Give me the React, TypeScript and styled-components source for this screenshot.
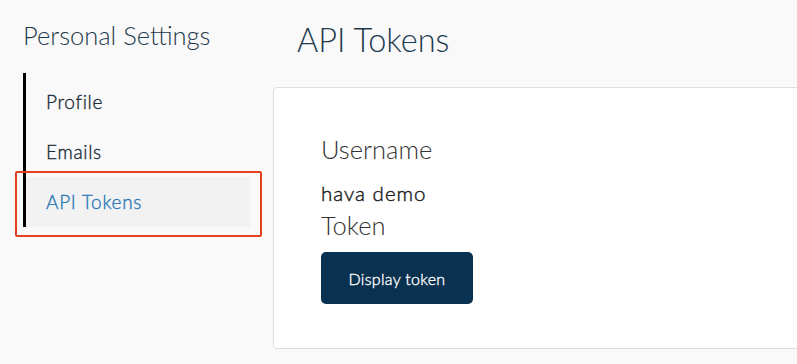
import React from 'react';
import styled, { createGlobalStyle } from 'styled-components';

const GlobalStyle = createGlobalStyle`
  html, body {
    margin: 0;
    padding: 0;
    background-color: #f9f9f9;
    font-family: Lato, 'Open Sans', sans-serif;
    overflow: hidden;
  }
`;

const Page = styled.div`
  display: flex;
  align-items: flex-start;
  padding-top: 21px;
  min-height: 364px;
  box-sizing: border-box;
  margin-right: -12px;
`;

const Sidebar = styled.aside`
  width: 273px;
  flex-shrink: 0;
  padding: 0 23px;
  box-sizing: border-box;
`;

const SidebarTitle = styled.h2`
  margin: 0;
  font-size: 25.5px;
  font-weight: 300;
  line-height: 28px;
  color: #1e3a4d;
  white-space: nowrap;
`;

const Nav = styled.nav`
  margin-top: 24px;
  padding-top: 4px;
  border-left: 3px solid #000;
  display: flex;
  flex-direction: column;
`;

const NavItem = styled.a<{ $active?: boolean }>`
  position: relative;
  display: block;
  height: 50px;
  line-height: 50px;
  padding-left: 20px;
  font-size: 19px;
  font-weight: 300;
  letter-spacing: 0.7px;
  -webkit-text-stroke: 0.35px currentColor;
  text-decoration: none;
  color: ${(p) => (p.$active ? '#2a78b6' : '#1a2a37')};
  background-color: ${(p) => (p.$active ? '#f2f2f2' : 'transparent')};
  cursor: pointer;
`;

// red annotation box drawn over the active item
const Highlight = styled.span`
  position: absolute;
  left: -11px;
  top: -6px;
  right: -12px;
  bottom: -10px;
  border: 2.5px solid #e2401f;
  border-radius: 2px;
  pointer-events: none;
`;

const Main = styled.main`
  flex: 1;
  display: flex;
  flex-direction: column;
`;

const Heading = styled.h1`
  margin: 0 0 28px 24px;
  font-size: 32.5px;
  font-weight: 300;
  line-height: 38px;
  color: #1e3a4d;
`;

const Card = styled.section`
  background-color: #fff;
  border: 1px solid #dedede;
  border-radius: 4px;
  padding: 47px 47px 44px;
  display: flex;
  flex-direction: column;
  align-items: flex-start;
`;

const Label = styled.div<{ $gap?: number }>`
  margin-top: ${(p) => p.$gap ?? 0}px;
  font-size: 25.5px;
  font-weight: 300;
  line-height: 29px;
  color: #333;
`;

const Value = styled.div`
  margin-top: 17px;
  font-size: 20.5px;
  font-weight: 300;
  letter-spacing: 1px;
  -webkit-text-stroke: 0.45px currentColor;
  line-height: 24px;
  color: #1e1e1e;
`;

const DisplayButton = styled.button`
  margin-top: 12px;
  width: 152px;
  height: 52px;
  border: 0;
  border-radius: 5px;
  background-color: #0b3150;
  color: #fff;
  font-family: Lato, sans-serif;
  font-size: 16px;
  font-weight: 300;
  letter-spacing: 0.3px;
  -webkit-text-stroke: 0.35px currentColor;
  cursor: pointer;
`;

export default function App() {
  return (
    <>
      <GlobalStyle />
      <Page>
        <Sidebar>
          <SidebarTitle>Personal Settings</SidebarTitle>
          <Nav>
            <NavItem>Profile</NavItem>
            <NavItem>Emails</NavItem>
            <NavItem $active>
              API Tokens
              <Highlight />
            </NavItem>
          </Nav>
        </Sidebar>
        <Main>
          <Heading>API Tokens</Heading>
          <Card>
            <Label>Username</Label>
            <Value>hava demo</Value>
            <Label $gap={6}>Token</Label>
            <DisplayButton>Display token</DisplayButton>
          </Card>
        </Main>
      </Page>
    </>
  );
}
